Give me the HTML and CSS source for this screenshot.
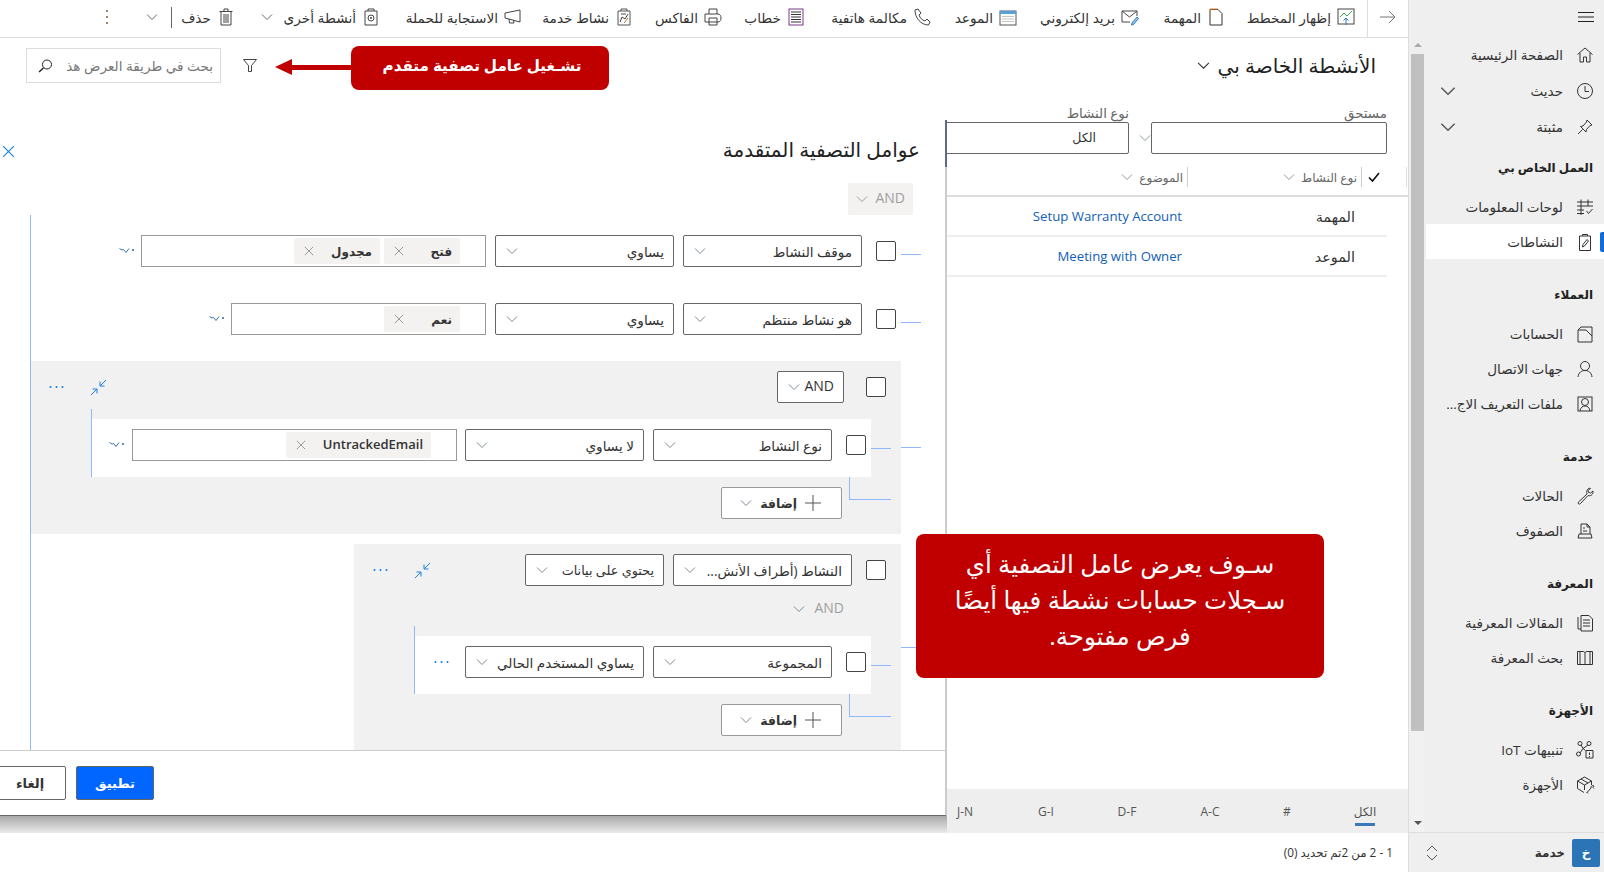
FILE: index.html
```html
<!DOCTYPE html>
<html lang="ar" dir="rtl">
<head>
  <meta charset="UTF-8" />
  <title>الأنشطة الخاصة بي</title>
  <link rel="stylesheet" href="styles.css">
</head>
<body>

  <svg class="defs" width="0" height="0">
    <symbol id="chev" viewBox="0 0 12 12"><path d="M1 3.5 L6 8.5 L11 3.5" fill="none" stroke="currentColor"/></symbol>
    <symbol id="close" viewBox="0 0 12 12"><path d="M1 1 L11 11 M11 1 L1 11" fill="none" stroke="currentColor"/></symbol>
    <symbol id="more" viewBox="0 0 16 8"><path d="M0.5 1.5 L3 3 L4.5 2.5 L7 5.5 L10 1.5" fill="none" stroke="#3a6fb0"/><circle cx="14" cy="3" r="1.1" fill="#3a6fb0"/></symbol>
    <symbol id="dots" viewBox="0 0 15 4"><circle cx="1.5" cy="2" r="1" fill="#0f7be0"/><circle cx="7.5" cy="2" r="1" fill="#0f7be0"/><circle cx="13.5" cy="2" r="1" fill="#0f7be0"/></symbol>
    <symbol id="collapse" viewBox="0 0 17 17"><path d="M16 1 L10 7 M10 2.5 V7 H14.5 M1 16 L7 10 M2.5 10 H7 V14.5" fill="none" stroke="#1a7ee0"/></symbol>
    <symbol id="plus" viewBox="0 0 16 16"><path d="M8 0 V16 M0 8 H16" fill="none" stroke="#555"/></symbol>
  </svg>

  <div class="app">

    <aside class="side">
      <div class="side-top">
        <svg class="burger" width="16" height="10" viewBox="0 0 16 10"><path d="M0 .5 H16 M0 5 H16 M0 9.5 H16" stroke="#222"/></svg>
      </div>
      <div class="side-main">
        <nav class="nav">
          <a class="nav-item tall"><svg class="ic" viewBox="0 0 20 20"><path d="M2.500 9.500 L10 3 L17.500 9.500 M5 8 V17 H8.500 V12 H11.500 V17 H15 V8"/></svg><span>الصفحة الرئيسية</span></a>
          <a class="nav-item tall"><svg class="ic" viewBox="0 0 20 20"><circle cx="10" cy="10" r="7.500"/><path d="M10 5 V10.500 H14"/></svg><span>حديث</span><svg class="nav-chev"><use href="#chev"/></svg></a>
          <a class="nav-item tall"><svg class="ic" viewBox="0 0 20 20"><path d="M12 3 L17 8 L15 8.500 L11.500 12.500 L11 15 L5.500 9.500 L8 9 L11.500 5 Z M7.500 12.500 L3 17"/></svg><span>مثبتة</span><svg class="nav-chev"><use href="#chev"/></svg></a>

          <h4 class="nav-head first">العمل الخاص بي</h4>
          <a class="nav-item"><svg class="ic" viewBox="0 0 20 20"><path d="M2 5 H18 M2 9 H18 M2 13 H9 M2 16.500 H9 M6 2.500 V18 M13 2.500 V9 M11.500 14 L13.500 16.500 L17.500 12"/></svg><span>لوحات المعلومات</span></a>
          <a class="nav-item active"><svg class="ic" viewBox="0 0 20 20"><path d="M4.500 4 H15.500 V18.500 H4.500 Z M7.500 4 V2.500 H12.500 V4 M7.500 15 L8 12.500 L12 7.500 L13.500 9 L9.500 14 Z"/></svg><span>النشاطات</span></a>

          <h4 class="nav-head">العملاء</h4>
          <a class="nav-item"><svg class="ic" viewBox="0 0 20 20"><path d="M3 6 L6 3 H17 V18 H3 Z M3 6 H11 L17 12"/></svg><span>الحسابات</span></a>
          <a class="nav-item"><svg class="ic" viewBox="0 0 20 20"><circle cx="10" cy="7" r="4.500"/><path d="M3 18 C3.500 13.500 6.500 11.500 10 11.500 C13.500 11.500 16.500 13.500 17 18"/></svg><span>جهات الاتصال</span></a>
          <a class="nav-item"><svg class="ic" viewBox="0 0 20 20"><rect x="3" y="3" width="14" height="14"/><circle cx="10" cy="8" r="3.500"/><path d="M5 17 C5.500 13.500 7.500 12 10 12 C12.500 12 14.500 13.500 15 17"/></svg><span>ملفات التعريف الاج...</span></a>

          <h4 class="nav-head">خدمة</h4>
          <a class="nav-item"><svg class="ic" viewBox="0 0 20 20"><path d="M12 8 L3.500 16 C2.500 17.500 4 19 5.500 17.500 L13 9.500 C15.500 10.500 18 8.500 18 6 L18 5 L15.500 7 L13.500 6.500 L13 4.500 L15.500 2.500 C13 1.500 11 4.500 12 8 Z"/></svg><span>الحالات</span></a>
          <a class="nav-item"><svg class="ic" viewBox="0 0 20 20"><path d="M6 13 V3 H12 L15 6 V13 M12 3 V6 H15 M4 13 H16 L17 17 H3 Z M8 7 H10 M8 10 H12"/></svg><span>الصفوف</span></a>

          <h4 class="nav-head">المعرفة</h4>
          <a class="nav-item"><svg class="ic" viewBox="0 0 20 20"><path d="M3 4 V16 H6 M6 2.500 H14 L17.500 6 V18 H6 Z M8 7 H15 M8 10 H15 M8 13 H15"/></svg><span>المقالات المعرفية</span></a>
          <a class="nav-item"><svg class="ic" viewBox="0 0 20 20"><path d="M2.500 3.500 H8 C9 3.500 10 4 10 5 C10 4 11 3.500 12 3.500 H17.500 V16.500 H2.500 Z M10 5 V16.500 M5 3.500 V16.500 M15 3.500 V16.500"/></svg><span>بحث المعرفة</span></a>

          <h4 class="nav-head">الأجهزة</h4>
          <a class="nav-item"><svg class="ic" viewBox="0 0 20 20"><circle cx="5" cy="3.500" r="2"/><circle cx="14" cy="3.500" r="2"/><circle cx="3.500" cy="14" r="2"/><path d="M6 5 L8 8.500 L13 5 M8 8.500 L5 13 M8 8.500 L10.500 10.500 M11 10.500 H18 V18 H11 Z M14.500 12.500 V15 M14.500 16 V17"/></svg><span>تنبيهات IoT</span></a>
          <a class="nav-item"><svg class="ic" viewBox="0 0 20 20"><path d="M2.500 6 L9.500 2 L16.500 6 V10 M2.500 6 V13.500 L9 17.500 M2.500 6 L9.500 10 V15 M9.500 10 L16.500 6 M6 4 L13 8 M12 17.500 L16 13 C15.500 11 17.500 10 19 11 L18 12.500 L19 13.500 M13 18.500 L11.500 17"/></svg><span>الأجهزة</span></a>
        </nav>
        <div class="sbar">
          <div class="sbar-btn"><i class="tri up"></i></div>
          <div class="sbar-thumb"></div>
          <div class="sbar-rest"><i class="tri"></i></div>
        </div>
      </div>
      <div class="side-foot">
        <span class="badge">خ</span>
        <strong>خدمة</strong>
        <svg class="updown" width="12" height="16" viewBox="0 0 12 16"><path d="M1 6 L6 1 L11 6 M1 10 L6 15 L11 10" fill="none" stroke="#555"/></svg>
      </div>
    </aside>

    <main class="main">
      <div class="toolbar">
        <div class="back"><svg width="16" height="14" viewBox="0 0 16 14"><path d="M0 7 H15 M9 1 L15 7 L9 13" fill="none" stroke="#777"/></svg></div>

        <a class="tool"><svg class="tic" viewBox="0 0 18 18"><rect x="1" y="1" width="16" height="15" fill="none" stroke="#444"/><path d="M3 9 L7 5 L10 8 L15 3" fill="none" stroke="#3aa64a"/><path d="M9 17 V10 M6.500 12.500 L9 10 L11.500 12.500" fill="none" stroke="#2a7ac0"/></svg><span>إظهار المخطط</span></a>
        <a class="tool"><svg class="tic" viewBox="0 0 18 18"><path d="M3 1.500 H11 L15 5.500 V17 H3 Z" fill="none" stroke="#333"/><path d="M3 4 V1 H11" fill="none" stroke="#e8822a"/></svg><span>المهمة</span></a>
        <a class="tool"><svg class="tic" viewBox="0 0 18 18"><path d="M1 3 H16 V8 M1 3 V14 H9 M1 3 L8.500 9 L16 3" fill="none" stroke="#444"/><path d="M11 15 L10.500 17 L12.500 16.500 L17.500 10.500 L16 9 Z" fill="#9cc8ee" stroke="#2a7ac0"/></svg><span>بريد إلكتروني</span></a>
        <a class="tool"><svg class="tic" viewBox="0 0 18 18"><rect x="1" y="3" width="16" height="14" fill="none" stroke="#555"/><rect x="1" y="3" width="16" height="3" fill="#5aa0d8"/><path d="M3.500 8.500 H14.500 M3.500 11 H14.500 M3.500 13.500 H14.500" stroke="#888" stroke-dasharray="1 1"/></svg><span>الموعد</span></a>
        <a class="tool"><svg class="tic" viewBox="0 0 18 18"><path d="M2 2 L5 1 L8 5 L6 7 C7 10 9 12 12 13 L14 11 L17 14 L15.500 17 C8 17 2 10 2 2 Z" fill="none" stroke="#444"/></svg><span>مكالمة هاتفية</span></a>
        <a class="tool"><svg class="tic" viewBox="0 0 18 18"><rect x="2" y="1" width="14" height="16" fill="none" stroke="#7a3a8a"/><path d="M4 4 H14 M4 6.500 H14 M4 9 H14 M4 11.500 H14 M4 14 H14" stroke="#333"/></svg><span>خطاب</span></a>
        <a class="tool"><svg class="tic" viewBox="0 0 18 18"><path d="M5 6 V1 H13 V6 M1 6 H14 C16 6 17 8 17 10 C17 12 16 14 14 14 H1 Z M5 10 H13 V17 H5 Z" fill="none" stroke="#444"/></svg><span>الفاكس</span></a>
        <a class="tool"><svg class="tic" viewBox="0 0 18 18"><path d="M3 3 H15 V17 H3 Z M6 3 V1 H12 V3" fill="none" stroke="#555"/><path d="M5 14 L7 9 L10 11 L13 6 M6 6 H11" fill="none" stroke="#444"/><path d="M9 15 L13 10" stroke="#b07a3a"/></svg><span>نشاط خدمة</span></a>
        <a class="tool"><svg class="tic" viewBox="0 0 18 18"><path d="M1 5 L16 2 V14 L1 10 Z M5 11 L5.500 15 L10 15 L9.500 12" fill="none" stroke="#444"/></svg><span>الاستجابة للحملة</span></a>
        <a class="tool"><svg class="tic" viewBox="0 0 18 18"><path d="M3 3 H15 V17 H3 Z M6 3 V1 H12 V3" fill="none" stroke="#444"/><circle cx="9" cy="10" r="3" fill="none" stroke="#444"/><circle cx="9" cy="10" r="1" fill="#444"/></svg><span>أنشطة أخرى</span><svg class="tool-chev"><use href="#chev"/></svg></a>
        <a class="tool"><svg class="tic" viewBox="0 0 18 18"><path d="M4 4 V17 H14 V4 M2.500 3.500 H15.500 M7 3 V1 H11 V3 M7 6 V15 M9 6 V15 M11 6 V15" fill="none" stroke="#444"/></svg><span>حذف</span></a>
        <div class="tool-sep"></div>
        <svg class="split-chev"><use href="#chev"/></svg>
        <svg class="kebab" width="4" height="16" viewBox="0 0 4 16"><circle cx="2" cy="2" r="1" fill="#7a5a3a"/><circle cx="2" cy="8" r="1" fill="#7a5a3a"/><circle cx="2" cy="14" r="1" fill="#7a5a3a"/></svg>
      </div>

      <div class="page-head">
        <h1>الأنشطة الخاصة بي</h1>
        <svg class="head-chev"><use href="#chev"/></svg>
        <svg class="funnel" width="14" height="13" viewBox="0 0 14 13"><path d="M.5 .5 H13.500 L8.500 6.500 V12.500 H5.500 V6.500 Z" fill="none" stroke="#444"/></svg>
        <div class="search">
          <span>بحث في طريقة العرض هذ</span>
          <svg width="17" height="14" viewBox="0 0 17 14"><circle cx="10" cy="5.500" r="4.500" fill="none" stroke="#222"/><path d="M6.500 9 L2 13" stroke="#222" stroke-width="1.500"/></svg>
        </div>
      </div>

      <div class="filters">
        <div class="field wide"><label>مستحق</label><div class="box"></div></div>
        <svg class="field-chev"><use href="#chev"/></svg>
        <div class="field narrow"><label>نوع النشاط</label><div class="box">الكل</div></div>
      </div>

      <div class="col-head">
        <svg class="check" width="12" height="12" viewBox="0 0 12 12"><path d="M1 6.500 L4.500 10 L11 2" fill="none" stroke="#111" stroke-width="1.600"/></svg>
        <div class="col first"><span>نوع النشاط</span><svg><use href="#chev"/></svg></div>
        <div class="col"><span>الموضوع</span><svg><use href="#chev"/></svg></div>
      </div>
      <div class="list">
        <div class="list-row"><span>المهمة</span><a>Setup Warranty Account</a></div>
        <div class="list-row"><span>الموعد</span><a>Meeting with Owner</a></div>
      </div>

      <div class="letters">
        <a class="on">الكل</a><a>#</a><a>A-C</a><a>D-F</a><a>G-I</a><a>J-N</a>
      </div>
      <div class="status">1 - 2 من 2تم تحديد (0)</div>

      <!-- filter panel sits over the list -->
      <section class="panel">
        <header class="panel-head">
          <h2>عوامل التصفية المتقدمة</h2>
          <svg class="panel-close"><use href="#close"/></svg>
        </header>
        <div class="root-and"><span>AND</span><svg><use href="#chev"/></svg></div>

        <div class="tree">
          <div class="row">
            <i class="cb"></i>
            <div class="dd"><span>موقف النشاط</span><svg><use href="#chev"/></svg></div>
            <div class="dd"><span>يساوي</span><svg><use href="#chev"/></svg></div>
            <div class="tags w345">
              <div class="tag"><b>فتح</b><svg><use href="#close"/></svg></div>
              <div class="tag t86"><b>مجدول</b><svg><use href="#close"/></svg></div>
            </div>
            <svg class="more"><use href="#more"/></svg>
          </div>

          <div class="row second">
            <i class="cb"></i>
            <div class="dd"><span>هو نشاط منتظم</span><svg><use href="#chev"/></svg></div>
            <div class="dd"><span>يساوي</span><svg><use href="#chev"/></svg></div>
            <div class="tags w255">
              <div class="tag"><b>نعم</b><svg><use href="#close"/></svg></div>
            </div>
            <svg class="more"><use href="#more"/></svg>
          </div>

          <div class="group g1">
            <div class="group-head">
              <i class="cb"></i>
              <div class="dd and"><span>AND</span><svg><use href="#chev"/></svg></div>
              <div class="group-tools">
                <svg class="collapse"><use href="#collapse"/></svg>
                <svg class="dots"><use href="#dots"/></svg>
              </div>
            </div>
            <div class="sub">
              <div class="sub-row">
                <i class="cb"></i>
                <div class="dd"><span>نوع النشاط</span><svg><use href="#chev"/></svg></div>
                <div class="dd"><span>لا يساوي</span><svg><use href="#chev"/></svg></div>
                <div class="tags w325">
                  <div class="tag latin"><b>UntrackedEmail</b><svg><use href="#close"/></svg></div>
                </div>
                <svg class="more"><use href="#more"/></svg>
              </div>
            </div>
            <div class="add-btn"><svg class="plus"><use href="#plus"/></svg><span>إضافة</span><svg class="add-chev"><use href="#chev"/></svg></div>
          </div>

          <div class="group g2">
            <div class="group-head">
              <i class="cb"></i>
              <div class="dd"><span>النشاط (أطراف الأنش...</span><svg><use href="#chev"/></svg></div>
              <div class="dd w139"><span>يحتوي على بيانات</span><svg><use href="#chev"/></svg></div>
              <div class="group-tools">
                <svg class="collapse"><use href="#collapse"/></svg>
                <svg class="dots"><use href="#dots"/></svg>
              </div>
            </div>
            <div class="sub-and"><span>AND</span><svg><use href="#chev"/></svg></div>
            <div class="sub flush">
              <div class="sub-row">
                <i class="cb"></i>
                <div class="dd"><span>المجموعة</span><svg><use href="#chev"/></svg></div>
                <div class="dd"><span>يساوي المستخدم الحالي</span><svg><use href="#chev"/></svg></div>
                <svg class="dots"><use href="#dots"/></svg>
              </div>
            </div>
            <div class="add-btn"><svg class="plus"><use href="#plus"/></svg><span>إضافة</span><svg class="add-chev"><use href="#chev"/></svg></div>
          </div>
        </div>

        <footer class="panel-foot">
          <button class="btn primary">تطبيق</button>
          <button class="btn cancel">إلغاء</button>
        </footer>
      </section>

      <!-- annotations -->
      <div class="callout small">تشـغيل عامل تصفية متقدم</div>
      <div class="arrow"></div>
      <div class="callout big">سـوف يعرض عامل التصفية أي<br>سـجلات حسابات نشطة فيها أيضًا<br>فرص مفتوحة.</div>
    </main>

  </div>

</body>
</html>
```

FILE: styles.css
```css
* {
  box-sizing: border-box;
}
html, body {
  margin: 0;
  height: 100%;
  overflow: hidden;
}
body {
  font-family: "Open Sans", "DejaVu Sans", sans-serif;
  font-size: 13px;
  color: #333;
  background: white;
}
.defs {
  position: absolute;
}
.app {
  display: flex;
  height: 872px;
}

/* sidebar */
.side {
  width: 196px;
  flex-shrink: 0;
  display: flex;
  flex-direction: column;
  background: #efefef;
  border-left: 1px solid #ddd;
}
.side-top {
  height: 37px;
  flex-shrink: 0;
  padding: 12px 10px 0 0;
}
.burger {
  display: block;
}
.side-main {
  flex: 1;
  display: flex;
  min-height: 0;
}
.nav {
  width: 178px;
  flex-shrink: 0;
}
.nav-item {
  display: flex;
  align-items: center;
  height: 35px;
  padding: 0 9px 0 14px;
  font-size: 13.5px;
  color: #333;
}
.nav-item.tall {
  height: 36px;
}
.nav-item.active {
  background: white;
  position: relative;
}
.nav-item.active::before {
  content: "";
  position: absolute;
  right: 0;
  top: 8px;
  width: 4px;
  height: 20px;
  background: #0f6cdd;
  border-radius: 2px 0 0 2px;
}
.ic {
  width: 20px;
  height: 20px;
  flex-shrink: 0;
  margin-left: 12px;
  fill: none;
  stroke: #333;
  stroke-width: 1;
}
.nav-chev {
  width: 16px;
  height: 16px;
  margin-right: auto;
  color: #555;
}
.nav-head {
  margin: 18px 0 4px;
  height: 35px;
  line-height: 35px;
  padding-right: 11px;
  font-size: 12px;
  color: #222;
}
.nav-head.first {
  margin-top: 5px;
}
.sbar {
  width: 13px;
  margin-right: 2px;
  display: flex;
  flex-direction: column;
}
.sbar-btn {
  height: 17px;
  display: flex;
  justify-content: center;
  padding-top: 6px;
}
.sbar-thumb {
  height: 677px;
  background: #c0c0c0;
}
.sbar-rest {
  flex: 1;
  display: flex;
  justify-content: center;
  align-items: flex-end;
  padding-bottom: 7px;
  background: #f1f1f1;
}
.tri {
  width: 0;
  height: 0;
  border-left: 4px solid transparent;
  border-right: 4px solid transparent;
  border-top: 4px solid #555;
}
.tri.up {
  border-top: 0;
  border-bottom: 4px solid #aaa;
}
.side-foot {
  height: 40px;
  flex-shrink: 0;
  border-top: 1px solid #ddd;
  display: flex;
  align-items: center;
  padding-right: 4px;
  font-size: 12px;
}
.badge {
  width: 28px;
  height: 28px;
  flex-shrink: 0;
  background: #2b74b5;
  color: white;
  border-radius: 2px;
  display: flex;
  align-items: center;
  justify-content: center;
  font-weight: bold;
  margin-left: 7px;
}
.updown {
  margin-right: auto;
  margin-left: 17px;
}

/* main column */
.main {
  flex: 1;
  min-width: 0;
  display: flex;
  flex-direction: column;
  position: relative;
  overflow: hidden;
}
.toolbar {
  height: 38px;
  flex-shrink: 0;
  border-bottom: 1px solid #ddd;
  display: flex;
  align-items: center;
  padding-bottom: 3px;
  font-size: 13.7px;
}
.back {
  width: 41px;
  height: 37px;
  flex-shrink: 0;
  align-self: flex-start;
  border-left: 1px solid #ddd;
  display: flex;
  align-items: center;
  justify-content: center;
  padding-bottom: 3px;
  margin-left: 12px;
}
.tool {
  display: flex;
  align-items: center;
  white-space: nowrap;
  color: #333;
  flex-shrink: 0;
}
.tool span {
  margin-right: 6px;
}
.tool:nth-child(2) { width: 130px; }
.tool:nth-child(3) { width: 86px; }
.tool:nth-child(4) { width: 122px; }
.tool:nth-child(5) { width: 86px; }
.tool:nth-child(6) { width: 126px; }
.tool:nth-child(7) { width: 83px; }
.tool:nth-child(8) { width: 89px; }
.tool:nth-child(9) { width: 111px; }
.tool:nth-child(10) { width: 142px; }
.tool:nth-child(11) { width: 145px; }
.tool:nth-child(12) { width: 63px; }
.tic {
  width: 18px;
  height: 18px;
  flex-shrink: 0;
}
.tool-chev {
  width: 12px;
  height: 12px;
  color: #666;
  margin: 0 auto 0 26px;
  flex-shrink: 0;
}
.tool-sep {
  width: 1px;
  height: 21px;
  flex-shrink: 0;
  background: #666;
  margin-left: 13px;
}
.split-chev {
  width: 12px;
  height: 12px;
  flex-shrink: 0;
  color: #666;
}
.kebab {
  flex-shrink: 0;
  margin-right: 37px;
}

.page-head {
  height: 62px;
  flex-shrink: 0;
  display: flex;
  align-items: center;
  padding: 0 32px 7px 26px;
}
.page-head h1 {
  margin: 0;
  font-size: 20px;
  font-weight: normal;
  color: #222;
}
.head-chev {
  width: 13px;
  height: 13px;
  margin-right: 8px;
  color: #333;
}
.funnel {
  margin-right: auto;
  margin-left: 22px;
}
.search {
  width: 195px;
  height: 35px;
  border: 1px solid #ddd;
  display: flex;
  align-items: center;
  padding: 0 7px 0 10px;
  color: #777;
  font-size: 13.6px;
  overflow: hidden;
}
.search span {
  white-space: nowrap;
  width: 150px;
  overflow: hidden;
  flex-shrink: 0;
}
.search svg {
  margin-right: auto;
  flex-shrink: 0;
}

.filters {
  height: 67px;
  flex-shrink: 0;
  display: flex;
  padding-right: 21px;
}
.field label {
  display: block;
  height: 22px;
  line-height: 26px;
  font-size: 13.4px;
  color: #666;
}
.box {
  height: 32px;
  border: 1px solid #666;
  border-radius: 2px;
  line-height: 30px;
  padding-right: 32px;
  color: #333;
  font-size: 12.5px;
}
.field.wide {
  width: 236px;
}
.field.narrow {
  width: 200px;
}
.field-chev {
  width: 12px;
  height: 12px;
  margin: 32px 0 0 10px;
  color: #8a9aa0;
}

.col-head {
  height: 30px;
  flex-shrink: 0;
  border-bottom: 2px solid #ddd;
  display: flex;
  align-items: flex-start;
  padding-right: 28px;
  font-size: 12px;
  color: #666;
  position: relative;
}
.col-head::before {
  content: "";
  position: absolute;
  right: 1px;
  top: 0;
  width: 1px;
  height: 20px;
  background: #ddd;
}
.check {
  margin: 4px 0 0 6px;
}
.col {
  display: flex;
  align-items: center;
  height: 20px;
  border-right: 1px solid #ccc;
  padding-right: 4px;
}
.col.first {
  width: 174px;
}
.col svg {
  width: 12px;
  height: 12px;
  margin-right: 6px;
  color: #8a9aa0;
}
.list {
  flex: 1;
  padding-right: 21px;
}
.list-row {
  height: 40px;
  display: grid;
  grid-template-columns: 205px 1fr;
  align-items: center;
  border-bottom: 2px solid #eee;
  font-size: 14.4px;
}
.list-row span {
  padding-right: 32px;
}
.list-row a {
  color: #1160b7;
  font-size: 13.2px;
}

.letters {
  height: 44px;
  flex-shrink: 0;
  background: #eee;
  display: flex;
  padding-right: 3px;
  padding-top: 14px;
  font-size: 12px;
  color: #555;
}
.letters a {
  text-align: center;
  line-height: 18px;
  height: 21px;
}
.letters a:nth-child(1) { width: 80px; }
.letters a:nth-child(2) { width: 76px; }
.letters a:nth-child(3) { width: 78px; }
.letters a:nth-child(4) { width: 88px; }
.letters a:nth-child(5) { width: 74px; }
.letters a:nth-child(6) { width: 88px; }
.letters a.on {
  position: relative;
}
.letters a.on::after {
  content: "";
  position: absolute;
  left: 30px;
  width: 20px;
  bottom: -2px;
  height: 3px;
  background: #3b78b8;
}
.status {
  height: 39px;
  flex-shrink: 0;
  background: white;
  padding-right: 15px;
  line-height: 38px;
  font-size: 11.8px;
  position: relative;
  z-index: 3;
}

/* advanced filter panel */
.panel {
  position: absolute;
  top: 120px;
  left: -20px;
  width: 967px;
  height: 696px;
  background: white;
  border-right: 2px solid #ccc;
  border-bottom: 1px solid #666;
  display: flex;
  flex-direction: column;
  z-index: 2;
}
.panel::before {
  content: "";
  position: absolute;
  top: 0;
  right: -2px;
  width: 2px;
  height: 47px;
  background: #5b6b85;
}
.panel::after {
  content: "";
  position: absolute;
  left: 0;
  right: -2px;
  bottom: -19px;
  height: 18px;
  background: linear-gradient(#a8a8a8, #eee);
}
.panel-head {
  height: 63px;
  flex-shrink: 0;
  display: flex;
  align-items: flex-start;
  padding: 17px 25px 0 22px;
}
.panel-head h2 {
  margin: 0;
  font-size: 20px;
  font-weight: normal;
  color: #222;
  line-height: 26px;
}
.panel-close {
  width: 13px;
  height: 13px;
  margin: 8px auto 0 0;
  color: #1a7ee0;
}
.root-and {
  width: 65px;
  height: 32px;
  flex-shrink: 0;
  margin-right: 32px;
  background: #f3f2f1;
  border-radius: 2px;
  display: flex;
  align-items: center;
  justify-content: space-between;
  padding: 0 8px;
  color: #a19f9d;
  font-size: 14px;
}
.root-and span,
.dd.and span,
.sub-and span {
  padding-bottom: 3px;
}
.root-and svg {
  width: 12px;
  height: 12px;
}
.tree {
  flex: 1;
  min-height: 0;
  overflow: hidden;
  margin: 0 24px 0 50px;
  border-left: 1px solid #8fb8ff;
  padding-top: 20px;
}
.row {
  display: flex;
  gap: 9px;
  height: 32px;
  padding-right: 25px;
  align-items: center;
  position: relative;
}
.row.second {
  margin-top: 36px;
}
.row::after,
.sub-row::after,
.group::after {
  content: "";
  position: absolute;
  right: 0;
  top: 19px;
  width: 20px;
  height: 1px;
  background: #8fb8ff;
}
.cb {
  display: block;
  width: 20px;
  height: 20px;
  flex-shrink: 0;
  border: 1px solid #444;
  border-radius: 2px;
  background: white;
  margin-left: 5px;
}
.dd {
  width: 179px;
  height: 32px;
  flex-shrink: 0;
  background: white;
  border: 1px solid #666;
  border-radius: 2px;
  display: flex;
  align-items: center;
  justify-content: space-between;
  padding: 0 9px 0 10px;
  font-size: 13.6px;
  white-space: nowrap;
}
.dd svg,
.sub-and svg,
.add-chev {
  width: 12px;
  height: 12px;
  flex-shrink: 0;
  color: #7a8a99;
}
.dd.and {
  width: 67px;
  font-size: 14px;
  margin-right: 8px;
}
.dd.w139 {
  width: 139px;
  font-size: 12.8px;
}
.tags {
  height: 32px;
  flex-shrink: 0;
  background: white;
  border: 1px solid #999;
  display: flex;
  align-items: center;
  gap: 4px;
  padding-right: 25px;
}
.w345 { width: 345px; }
.w255 { width: 255px; }
.w325 { width: 325px; margin-right: -1px; }
.tag {
  width: 76px;
  height: 26px;
  background: #f3f2f1;
  border-radius: 2px;
  display: flex;
  align-items: center;
  justify-content: space-between;
  padding: 0 8px 0 10px;
  font-size: 12px;
}
.tag.t86 {
  width: 86px;
}
.tag.latin {
  width: 145px;
  font-size: 13px;
}
.tag.latin b {
  font-weight: 600;
  padding-bottom: 3px;
}
.tag svg {
  width: 10px;
  height: 10px;
  color: #888;
}
.more {
  width: 16px;
  height: 8px;
  flex-shrink: 0;
  margin-right: -3px;
}
.group {
  background: #f1f1f1;
  margin-right: 20px;
  padding-top: 10px;
  position: relative;
}
.group.g1 {
  margin-top: 26px;
  padding-bottom: 15px;
}
.group.g1::after {
  top: 86px;
  right: -20px;
}
.group.g2 {
  margin-top: 10px;
  margin-left: 323px;
  padding-bottom: 14px;
}
.group.g2::after {
  top: 103px;
  right: -20px;
}
.group-head {
  display: flex;
  align-items: center;
  gap: 9px;
  height: 32px;
  padding: 0 15px 0 18px;
}
.g2 .group-head {
  padding-left: 19px;
}
.group-tools {
  margin-right: auto;
  display: flex;
  align-items: center;
  gap: 26px;
}
.collapse {
  width: 17px;
  height: 17px;
}
.dots {
  width: 15px;
  height: 4px;
  flex-shrink: 0;
}
.sub-and {
  height: 40px;
  padding: 6px 57px 0 0;
  display: flex;
  align-items: center;
  gap: 9px;
  color: #a19f9d;
  font-size: 14px;
}
.sub {
  margin: 6px 30px 0 0;
  margin-left: 60px;
  padding-top: 10px;
  border-left: 1px solid #8fb8ff;
}
.sub.flush {
  margin-top: 0;
}
.sub-row {
  display: flex;
  align-items: flex-start;
  gap: 9px;
  height: 58px;
  background: white;
  padding: 10px 5px 0 0;
  position: relative;
}
.sub-row .cb {
  margin-top: 6px;
}
.sub-row::after {
  right: -20px;
  top: 29px;
}
.sub-row > .more {
  margin: 12px -2px 0 0;
}
.sub-row > .dots {
  margin: 14px 7px 0 0;
}
.add-btn {
  position: relative;
  width: 121px;
  height: 32px;
  margin: 10px 59px 0 0;
  background: white;
  border: 1px solid #999;
  border-radius: 2px;
  display: flex;
  align-items: center;
  gap: 8px;
  padding-right: 20px;
  font-size: 12.5px;
  font-weight: 600;
}
.add-btn::after {
  content: "";
  position: absolute;
  top: -11px;
  right: -50px;
  width: 41px;
  height: 22px;
  border-left: 1px solid #8fb8ff;
  border-bottom: 1px solid #8fb8ff;
}
.plus {
  width: 16px;
  height: 16px;
  flex-shrink: 0;
}
.panel-foot {
  height: 65px;
  flex-shrink: 0;
  border-top: 1px solid #ccc;
  display: flex;
  justify-content: flex-end;
  gap: 10px;
  padding: 15px 0 0 8px;
}
.btn {
  width: 78px;
  height: 34px;
  border: 1px solid #666;
  border-radius: 2px;
  background: white;
  color: #333;
  font-family: inherit;
  font-size: 13px;
  font-weight: 600;
}
.btn.primary {
  background: #0066ff;
  color: white;
}
.btn.cancel {
  padding-left: 12px;
}

/* red notes over the screenshot */
.callout {
  position: absolute;
  background: #c00000;
  color: white;
  border-radius: 8px;
  text-align: center;
  z-index: 4;
}
.callout.small {
  left: 351px;
  top: 46px;
  width: 258px;
  height: 44px;
  padding-left: 4px;
  line-height: 38px;
  font-size: 15.2px;
  font-weight: bold;
}
.callout.big {
  left: 916px;
  top: 534px;
  width: 408px;
  height: 144px;
  padding-top: 12px;
  font-size: 24.5px;
  line-height: 36px;
}
.arrow {
  position: absolute;
  left: 292px;
  top: 64.500px;
  width: 59px;
  height: 5px;
  background: #c00000;
  z-index: 4;
}
.arrow::before {
  content: "";
  position: absolute;
  left: -17px;
  top: -6px;
  border-top: 8.500px solid transparent;
  border-bottom: 8.500px solid transparent;
  border-right: 17px solid #c00000;
}
```
